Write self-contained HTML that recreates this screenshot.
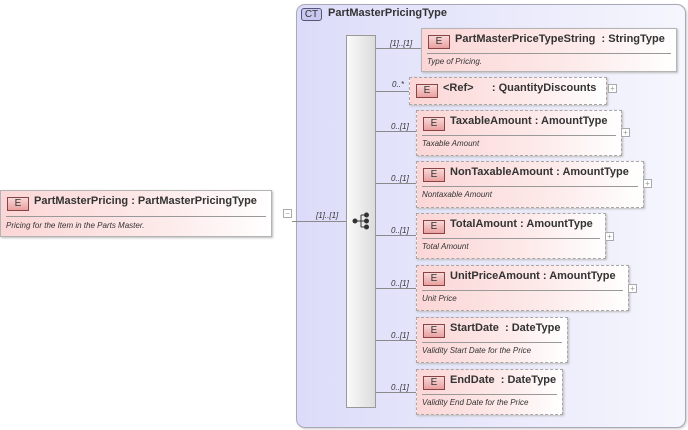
<!DOCTYPE html>
<html><head><style>
*{margin:0;padding:0;box-sizing:border-box}
body{width:688px;height:430px;background:#fff;position:relative;overflow:hidden;font-family:"Liberation Sans",sans-serif}
.a{position:absolute}
.ct{left:296px;top:4px;width:390px;height:424px;border:1px solid #a8a8b8;border-radius:9px;background:linear-gradient(90deg,#dcdcfa,#eeeefc 70%,#f6f6fe);box-shadow:1px 1px 2px #ccc}
.ctb{left:301px;top:8px;width:21px;height:13px;border:1px solid #555577;border-radius:3px;background:#c8c8f0;font-size:10px;line-height:11px;text-align:center;color:#333}
.ctt{left:328px;top:7px;font-size:11px;font-weight:bold;color:#333}
.bar{left:346px;top:35px;width:30px;height:373px;border:1px solid #999;background:linear-gradient(90deg,#fafafa,#dcdcdc);}
.ln{height:1px;background:#8a8a8a}
.box{border:1px solid #b4b4b4;background:linear-gradient(90deg,#fcd6d6,#fdeaea 60%,#fff);box-shadow:1px 1px 2px #bbb}
.d{border:1px dashed #a8a8a8}
.e{position:absolute;left:6px;top:6px;width:22px;height:14px;border:1px solid #884444;background:linear-gradient(180deg,#f8d8d8,#eaa0a0);font-size:10px;line-height:12px;text-align:center;color:#333}
.t{position:absolute;left:33px;top:4px;font-size:11px;font-weight:bold;color:#333;white-space:nowrap}
.hr{position:absolute;left:5px;right:5px;top:24px;height:1px;background:#999}
.ds{position:absolute;left:5px;top:28px;font-size:8px;font-style:italic;color:#333;white-space:nowrap}
.c{font-size:8px;font-style:italic;color:#333}
.pl{width:9px;height:9px;border:1px solid #aaa;background:#fff;font-size:8px;line-height:7px;text-align:center;color:#999}
</style></head><body>
<div class="a ct"></div>
<div class="a ctb">CT</div>
<div class="a ctt">PartMasterPricingType</div>
<div class="a bar"></div>
<svg class="a" style="left:352px;top:211px" width="20" height="20"><g fill="#333" stroke="#333"><circle cx="3" cy="10" r="2"/><line x1="3" y1="10" x2="9" y2="10"/><line x1="9" y1="4" x2="9" y2="16"/><line x1="9" y1="4" x2="14" y2="4"/><line x1="9" y1="10" x2="14" y2="10"/><line x1="9" y1="16" x2="14" y2="16"/><circle cx="14.5" cy="4" r="2"/><circle cx="14.5" cy="10" r="2"/><circle cx="14.5" cy="16" r="2"/></g></svg>

<!-- left element -->
<div class="a box" style="left:0;top:190px;width:272px;height:47px"><div class="e">E</div><div class="t">PartMasterPricing&nbsp;: PartMasterPricingType</div><div class="hr" style="top:25px"></div><div class="ds" style="top:30px">Pricing for the Item in the Parts Master.</div></div>
<div class="a pl" style="left:283px;top:209px">−</div>
<div class="a ln" style="left:292px;top:221px;width:54px"></div>
<div class="a c" style="left:316px;top:211px">[1]..[1]</div>

<!-- lines -->
<div class="a ln" style="left:376px;top:48px;width:45px"></div>
<div class="a ln" style="left:376px;top:91px;width:33px"></div>
<div class="a ln" style="left:376px;top:131px;width:40px"></div>
<div class="a ln" style="left:376px;top:183px;width:40px"></div>
<div class="a ln" style="left:376px;top:235px;width:40px"></div>
<div class="a ln" style="left:376px;top:288px;width:40px"></div>
<div class="a ln" style="left:376px;top:340px;width:40px"></div>
<div class="a ln" style="left:376px;top:392px;width:40px"></div>

<div class="a c" style="left:390px;top:39px">[1]..[1]</div>
<div class="a c" style="left:392px;top:80px">0..*</div>
<div class="a c" style="left:391px;top:122px">0..[1]</div>
<div class="a c" style="left:391px;top:174px">0..[1]</div>
<div class="a c" style="left:391px;top:226px">0..[1]</div>
<div class="a c" style="left:391px;top:279px">0..[1]</div>
<div class="a c" style="left:391px;top:331px">0..[1]</div>
<div class="a c" style="left:391px;top:383px">0..[1]</div>

<div class="a box" style="left:421px;top:28px;width:256px;height:44px"><div class="e">E</div><div class="t">PartMasterPriceTypeString&nbsp; : StringType</div><div class="hr"></div><div class="ds">Type of Pricing.</div></div>

<div class="a box d" style="left:409px;top:77px;width:198px;height:28px"><div class="e">E</div><div class="t">&lt;Ref&gt;&nbsp;&nbsp;&nbsp;&nbsp;&nbsp; : QuantityDiscounts</div></div>
<div class="a pl" style="left:608px;top:84px">+</div>

<div class="a box d" style="left:416px;top:110px;width:206px;height:46px"><div class="e">E</div><div class="t">TaxableAmount&nbsp;: AmountType</div><div class="hr"></div><div class="ds">Taxable Amount</div></div>
<div class="a pl" style="left:621px;top:128px">+</div>

<div class="a box d" style="left:416px;top:161px;width:228px;height:47px"><div class="e">E</div><div class="t">NonTaxableAmount&nbsp;: AmountType</div><div class="hr"></div><div class="ds">Nontaxable Amount</div></div>
<div class="a pl" style="left:643px;top:179px">+</div>

<div class="a box d" style="left:416px;top:213px;width:190px;height:46px"><div class="e">E</div><div class="t">TotalAmount&nbsp;: AmountType</div><div class="hr"></div><div class="ds">Total Amount</div></div>
<div class="a pl" style="left:605px;top:232px">+</div>

<div class="a box d" style="left:416px;top:265px;width:213px;height:46px"><div class="e">E</div><div class="t">UnitPriceAmount&nbsp;: AmountType</div><div class="hr"></div><div class="ds">Unit Price</div></div>
<div class="a pl" style="left:628px;top:284px">+</div>

<div class="a box d" style="left:416px;top:317px;width:152px;height:46px"><div class="e">E</div><div class="t">StartDate&nbsp; : DateType</div><div class="hr"></div><div class="ds">Validity Start Date for the Price</div></div>

<div class="a box d" style="left:416px;top:369px;width:147px;height:46px"><div class="e">E</div><div class="t">EndDate&nbsp; : DateType</div><div class="hr"></div><div class="ds">Validity End Date for the Price</div></div>
</body></html>
